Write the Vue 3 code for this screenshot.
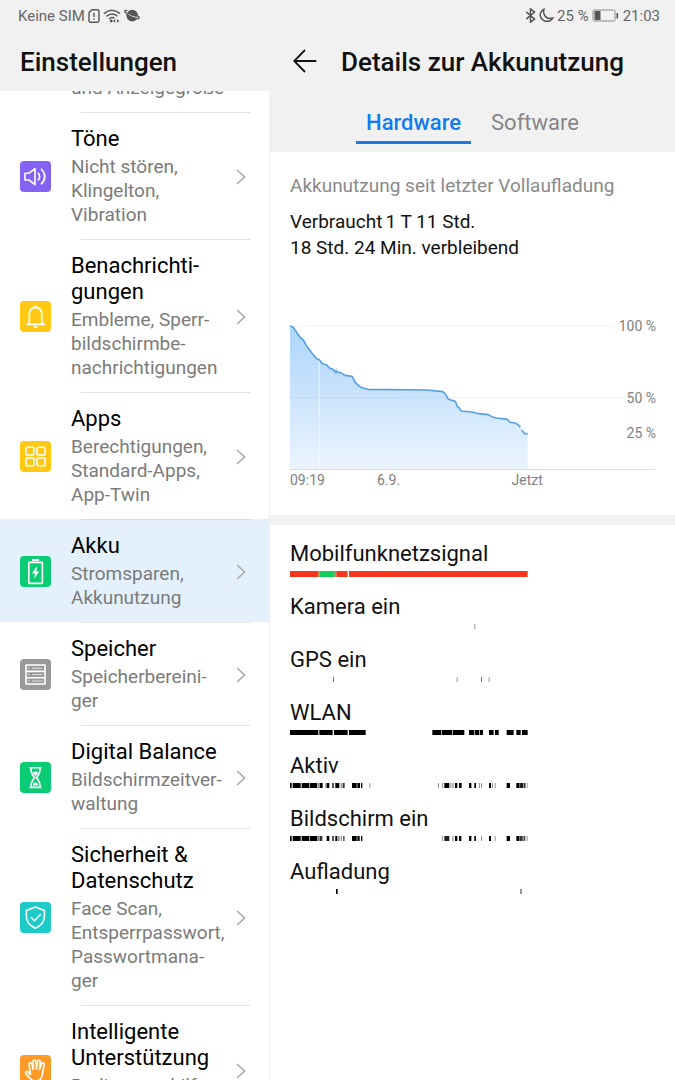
<script setup>
import { ref, computed } from 'vue'

const activeTab = ref('Hardware')
const tabs = ['Hardware', 'Software']

// \u00AD marks the places where a long word may break
const items = [
  { icon: 'sound', color: '#8463f2', title: 'Töne', desc: 'Nicht stören, Klingelton, Vibration' },
  { icon: 'bell', color: '#ffc813', title: 'Benachrichti\u00ADgungen', desc: 'Embleme, Sperr\u00ADbildschirmbe\u00ADnachrichtigungen' },
  { icon: 'apps', color: '#ffc813', title: 'Apps', desc: 'Berechtigungen, Standard-Apps, App-Twin' },
  { icon: 'battery', color: '#0bcb74', title: 'Akku', desc: 'Stromsparen, Akkunutzung', active: true },
  { icon: 'storage', color: '#999999', title: 'Speicher', desc: 'Speicherbereini\u00ADger' },
  { icon: 'hourglass', color: '#0bcb74', title: 'Digital Balance', desc: 'Bildschirmzeitver\u00ADwaltung' },
  { icon: 'shield', color: '#1ccbc8', title: 'Sicherheit & Datenschutz', desc: 'Face Scan, Entsperrpasswort, Passwortmana\u00ADger' },
  { icon: 'hand', color: '#ff9a26', title: 'Intelligente Unterstützung', desc: 'Bedienungshilfen' }
]

// chart space: 1095 wide, 429 high (0 % at the bottom)
const points = [
  [0, 0], [10, 4], [22, 22], [32, 36], [40, 42], [50, 60], [65, 80], [80, 98], [88, 101],
  [98, 114], [110, 116], [118, 126], [126, 128], [134, 136], [142, 137], [155, 142],
  [165, 148], [186, 151], [190, 158], [196, 170], [210, 182], [220, 187], [235, 190],
  [410, 192], [458, 197], [466, 204], [474, 218], [480, 221], [496, 226], [501, 240],
  [507, 245], [514, 255], [545, 258], [560, 262], [595, 266], [605, 272], [620, 276],
  [652, 280], [660, 289], [678, 292], [686, 298], [691, 304]
]
const tail = [[695, 312], [704, 323], [713, 323]]

const toPath = (list) => list.map((p) => p.join(',')).join(' ')
const linePath = computed(() => toPath(points))
const tailPath = computed(() => toPath(tail))
const areaPath = computed(() => `0,429 ${toPath(points)} ${toPath(tail)} 713,429`)

const levels = [
  { text: '100 %', top: 0 },
  { text: '50 %', top: 50 },
  { text: '25 %', top: 75 }
]
const times = [
  { text: '09:19', left: 0, edge: true },
  { text: '6.9.', left: 27 },
  { text: 'Jetzt', left: 65 }
]

// each bar: start, width, colour
const K = '#000000'
const G = '#999999'
const usage = [
  { name: 'Mobilfunknetzsignal', thick: true, bars: [[0, 86, '#f4361f'], [86, 4, '#c9a020'], [90, 44, '#12cf5a'], [134, 5, '#a09a30'], [139, 34, '#f4361f'], [177, 536, '#f4361f']] },
  { name: 'Kamera ein', bars: [[553, 3, G]] },
  { name: 'GPS ein', bars: [[129, 3, '#777777'], [500, 3, G], [573, 3, '#777777'], [596, 3, G]] },
  { name: 'WLAN', bars: [[0, 85, K], [88, 40, K], [132, 41, K], [177, 50, K], [427, 27, K], [456, 31, K], [489, 34, K], [537, 16, K], [555, 12, K], [569, 10, K], [597, 14, K], [615, 11, K], [650, 21, K], [679, 13, K], [696, 17, K]] },
  { name: 'Aktiv', bars: [[0, 5, K], [8, 24, K], [35, 23, K], [60, 21, K], [82, 6, G], [89, 9, K], [105, 4, G], [110, 8, K], [127, 4, K], [136, 12, K], [152, 4, G], [158, 6, '#333333'], [186, 14, K], [202, 8, K], [213, 4, K], [238, 3, G], [444, 3, G], [456, 3, G], [463, 15, K], [481, 3, G], [487, 4, G], [495, 7, K], [507, 8, K], [537, 7, K], [553, 5, K], [567, 3, G], [573, 3, G], [597, 6, K], [606, 3, G], [614, 3, G], [650, 10, K], [679, 8, K], [688, 12, '#222222'], [701, 6, '#444444'], [711, 2, G]] },
  { name: 'Bildschirm ein', bars: [[0, 5, K], [8, 24, K], [35, 23, K], [60, 21, K], [82, 6, '#777777'], [89, 8, '#333333'], [110, 8, K], [127, 4, K], [136, 6, K], [143, 6, G], [152, 4, G], [159, 5, '#666666'], [186, 14, K], [202, 7, K], [213, 4, K], [456, 3, G], [463, 15, '#222222'], [487, 4, G], [495, 7, K], [507, 7, K], [537, 7, K], [553, 5, K], [573, 3, G], [597, 6, K], [614, 3, G], [650, 10, K], [679, 8, K], [688, 10, '#333333'], [700, 6, '#555555'], [710, 3, G]] },
  { name: 'Aufladung', bars: [[138, 5, K], [691, 4, '#666666']] }
]
</script>

<template>
  <div class="screen">
    <div class="status-bar">
      <div class="status-side">
        <span>Keine SIM</span>
        <svg class="ic-sim" viewBox="0 0 12 14">
          <path d="M4 .8H9.4Q11 .8 11 2.4V11.6Q11 13.2 9.4 13.2H2.6Q1 13.2 1 11.6V3.8Z" />
          <path d="M6 3.8V8M6 9.4V10.8" />
        </svg>
        <svg class="ic-wifi" viewBox="0 0 18 14">
          <path d="M1 4.6Q9 -2.2 17 4.6M3.4 7.4Q9 2.6 14.4 7.2M5.8 10Q9 7.4 11.6 9.4" />
          <circle cx="8.2" cy="12" r="1.4" />
          <path class="solid" d="M10 11.9L12.2 9.9V13.8ZM16.2 11.9L14 9.9V13.8Z" />
        </svg>
        <svg class="ic-planet" viewBox="0 0 16 13">
          <circle cx="8.2" cy="6.6" r="5.8" />
          <path class="gap" d="M1.6 3Q6 8 14.6 8.6" />
          <path d="M3.4 1.6Q-0.6 .8 1.4 3.4Q5.6 8.6 12.6 9.6Q16.6 9.8 14.2 7" />
        </svg>
      </div>
      <div class="status-side">
        <svg class="ic-bt" viewBox="0 0 10 14">
          <path d="M1 3.6L8.8 10.2L5 13.2V.8L8.8 3.8L1 10.4" />
        </svg>
        <svg class="ic-moon" viewBox="0 0 14 14">
          <path d="M4.6 1.2C1.4 2.6 .4 6.2 1.8 9C3.6 12.8 9.6 14.2 13 9.4C9.6 10.4 6.8 9.6 5.4 7.2C4.4 5.4 4 3.2 4.6 1.2Z" />
        </svg>
        <span>25 %</span>
        <svg class="ic-cell" viewBox="0 0 27 13">
          <rect class="shell" x="1" y="1" width="22" height="11" rx="1.5" />
          <rect x="2.5" y="2" width="6" height="9" />
          <rect x="24.5" y="4" width="1.6" height="5.4" />
        </svg>
        <span class="clock">21:03</span>
      </div>
    </div>

    <div class="columns">
      <nav class="sidebar">
        <header class="side-head">
          <h1>Einstellungen</h1>
        </header>
        <div class="side-scroll">
          <ul class="menu">
            <li class="cut">
              <a class="row" href="#">
                <span class="texts"><span class="desc">und Anzeigegröße</span></span>
              </a>
            </li>
            <li v-for="item in items" :key="item.title" :class="{ active: item.active }">
              <div class="line"></div>
              <a class="row" href="#">
                <span class="tile" :style="{ background: item.color }">
                  <svg viewBox="0 0 31 31">
                    <g v-if="item.icon === 'sound'">
                      <path d="M5 12.2V19H9L15 23.6V7.6L9 12.2Z" />
                      <path d="M18 11.8Q21.2 15.6 18 19.4M21 7.8Q28.6 15.6 21 23.4" />
                    </g>
                    <g v-else-if="item.icon === 'bell'">
                      <path d="M6.4 23.4H25M8.4 23.2Q9.4 21.6 9.4 19V13Q9.6 6.6 15.6 6.4Q21.6 6.6 21.8 13V19Q21.8 21.6 22.8 23.2" />
                      <path class="fill" d="M13.4 25.2H17.8Q17.4 27 15.6 27T13.4 25.2ZM14.2 6.4Q14.4 4.6 15.6 4.6T17 6.4Z" />
                    </g>
                    <g v-else-if="item.icon === 'apps'">
                      <rect x="6" y="6.2" width="8" height="7.8" rx="1.4" />
                      <rect x="17" y="6.2" width="8" height="7.8" rx="1.4" />
                      <rect x="6" y="17" width="8" height="7.8" rx="1.4" />
                      <rect x="17" y="17" width="8" height="7.8" rx="1.4" />
                    </g>
                    <g v-else-if="item.icon === 'battery'">
                      <rect x="8.8" y="6.4" width="13.6" height="21" rx=".8" />
                      <path class="fill" d="M12 3H19V5H12ZM16.2 11L12 17.4H15L14.2 22.4L19.2 15.6H16L17.4 11Z" />
                    </g>
                    <g v-else-if="item.icon === 'storage'">
                      <path d="M6 6H25V25H6ZM6 12.4H25M6 18.8H25" />
                      <path d="M8.2 9.2H10M12 9.2H22.6M8.2 15.6H10M12 15.6H22.6M8.2 22H10M12 22H22.6" class="faint" />
                    </g>
                    <g v-else-if="item.icon === 'hourglass'">
                      <path d="M9.6 5.8H21.4M9.6 25.4H21.4M11 6Q10.6 11.4 14.6 15.6Q10.6 19.8 11 25.2M20 6Q20.4 11.4 16.4 15.6Q20.4 19.8 20 25.2" />
                      <path class="fill" d="M12.8 10.2Q15.6 8.8 18.2 10.2Q17.4 12.8 15.5 14Q13.6 12.8 12.8 10.2ZM12.4 23.6Q13.4 20.4 15.5 20.2Q17.6 20.4 18.6 23.6Z" />
                    </g>
                    <g v-else-if="item.icon === 'shield'">
                      <path d="M15.4 5L24.4 8.4V14.6Q24.2 22.6 15.4 26.2Q6.6 22.6 6.4 14.6V8.4Z" />
                      <path d="M10.8 15L14.4 18.8L20.8 12.2" />
                    </g>
                    <g v-else>
                      <path d="M10.4 17.6L9 9.8Q8.8 8 10 7.8T11.8 9L13.2 14.4L13 6.8Q13 5 14.4 5T15.8 6.6L16.4 14L17.6 6.4Q17.8 4.8 19.2 5.2T20.2 7L19.4 14.6L21.6 9Q22.2 7.6 23.4 8T24 10L22.4 19Q21.6 25.6 16 26Q12.6 26 10 23.4L5.8 18.6Q5 17.2 6 16.6T8 17L10.4 19.4Z" />
                    </g>
                  </svg>
                </span>
                <span class="texts">
                  <span class="title">{{ item.title }}</span>
                  <span class="desc">{{ item.desc }}</span>
                </span>
                <svg class="chevron" viewBox="0 0 10 16"><path d="M1 1L8.6 8L1 15" /></svg>
              </a>
            </li>
          </ul>
        </div>
      </nav>

      <main class="detail">
        <header class="detail-head">
          <div class="title-row">
            <button class="back" type="button" aria-label="Zurück">
              <svg viewBox="0 0 24 24"><path d="M23.4 12H1.2M12 1L1.2 12L12 23" /></svg>
            </button>
            <h2>Details zur Akkunutzung</h2>
          </div>
          <div class="tabs">
            <button
              v-for="tab in tabs"
              :key="tab"
              type="button"
              class="tab"
              :class="{ selected: tab === activeTab }"
              @click="activeTab = tab"
            >
              {{ tab }}
            </button>
          </div>
        </header>

        <section class="summary">
          <p class="hint">Akkunutzung seit letzter Vollaufladung</p>
          <p class="used"><span>Verbraucht</span><span>1 T 11 Std.</span></p>
          <p>18 Std. 24 Min. verbleibend</p>

          <div class="chart">
            <svg viewBox="0 0 1095 429" preserveAspectRatio="none">
              <defs>
                <linearGradient id="level-fill" x1="0" y1="0" x2="0" y2="1">
                  <stop offset="0" stop-color="#acd4fb" />
                  <stop offset="1" stop-color="#ebf4fe" />
                </linearGradient>
              </defs>
              <polygon :points="areaPath" fill="url(#level-fill)" />
              <path class="grid" d="M0 0H1095M0 215H1095" />
              <path class="mark" d="M88 102V429" />
              <polyline class="curve" :points="linePath" />
              <polyline class="curve" :points="tailPath" />
              <path class="curve thin" d="M138 128V144" />
            </svg>
            <span v-for="l in levels" :key="l.text" class="level" :style="{ top: l.top + '%' }">{{ l.text }}</span>
          </div>
          <div class="times">
            <span
              v-for="t in times"
              :key="t.text"
              :class="{ edge: t.edge }"
              :style="{ left: t.left + '%' }"
            >{{ t.text }}</span>
          </div>
        </section>

        <section class="usage">
          <div v-for="u in usage" :key="u.name" class="usage-row">
            <h3>{{ u.name }}</h3>
            <svg :class="{ thick: u.thick }" viewBox="0 0 1095 10" preserveAspectRatio="none">
              <rect v-for="(b, i) in u.bars" :key="i" :x="b[0]" y="0" :width="b[1]" height="10" :fill="b[2]" />
            </svg>
          </div>
        </section>
      </main>
    </div>
  </div>
</template>

<style>
body {
  margin: 0;
  background: #ffffff;
}
</style>

<style scoped>
.screen {
  height: 100vh;
  display: flex;
  flex-direction: column;
  overflow: hidden;
  background: #ffffff;
  color: #111111;
  font-family: Roboto, "Noto Sans", sans-serif;
}

h1, h2, h3, p, ul {
  margin: 0;
  padding: 0;
  font-weight: 400;
}

button {
  border: none;
  background: none;
  padding: 0;
  font-family: inherit;
  cursor: pointer;
}

svg {
  display: block;
  fill: none;
}

/* status bar */
.status-bar {
  flex: none;
  height: 31px;
  padding: 0 15px 0 18px;
  display: flex;
  justify-content: space-between;
  align-items: center;
  background: #f1f1f1;
  color: #666666;
  font-size: 15px;
}

.status-side {
  display: flex;
  align-items: center;
  gap: 3px;
}

.status-side svg {
  stroke: #555555;
  stroke-width: 1.4;
}

.ic-sim {
  width: 12px;
  height: 14px;
}

.ic-wifi {
  width: 18px;
  height: 14px;
}

.ic-wifi .solid {
  fill: #555555;
  stroke: none;
}

.ic-wifi circle {
  fill: #555555;
  stroke: none;
}

.ic-planet {
  width: 16px;
  height: 13px;
}

.ic-planet circle {
  fill: #555555;
  stroke: none;
}

.ic-planet .gap {
  stroke: #f1f1f1;
  stroke-width: 1;
}

.ic-bt {
  width: 11px;
  height: 15px;
}

.ic-moon {
  width: 15px;
  height: 15px;
}

.ic-cell {
  width: 27px;
  height: 13px;
}

.status-side .ic-cell {
  fill: #555555;
  stroke: none;
}

.ic-cell .shell {
  fill: none;
  stroke: #888888;
  stroke-width: 1;
}

.clock {
  margin-left: 1px;
}

/* two columns */
.columns {
  flex: 1;
  min-height: 0;
  display: flex;
}

.sidebar {
  width: 40%;
  box-sizing: border-box;
  display: flex;
  flex-direction: column;
}

.side-head {
  flex: none;
  height: 60px;
  padding-left: 20px;
  display: flex;
  align-items: center;
  background: #f1f1f1;
}

h1, h2 {
  padding-top: 2px;
  font-size: 26px;
  line-height: 32px;
  font-weight: 500;
}

.side-scroll {
  flex: 1;
  min-height: 0;
  overflow: hidden;
  border-right: 1px solid #f1f1f1;
}

/* the list stands scrolled, so its first entry is half hidden */
.menu {
  list-style: none;
  margin-top: -28px;
}

.line {
  height: 1px;
  margin: 0 19px 0 81px;
  background: #e2e2e2;
}

.active {
  background: #e4f1fd;
}

.active .line {
  background: #cfdbe6;
}

.row {
  display: flex;
  align-items: center;
  padding: 13px 20px 12px;
  color: inherit;
  text-decoration: none;
}

.tile {
  flex: none;
  width: 31px;
  height: 31px;
  border-radius: 4px;
}

.tile svg {
  width: 31px;
  height: 31px;
  stroke: #ffffff;
  stroke-width: 1.6;
  stroke-linejoin: round;
}

.tile .fill {
  fill: #ffffff;
  stroke: none;
}

.tile .faint {
  stroke-width: 1;
  opacity: 0.7;
}

.texts {
  flex: 1;
  min-width: 0;
  margin: 0 11px 0 20px;
  display: flex;
  flex-direction: column;
  gap: 3px;
}

.title {
  font-size: 22px;
  line-height: 26px;
  color: #000000;
}

.desc {
  min-height: 48px;
  font-size: 19px;
  line-height: 24px;
  color: #7b7b7b;
}

.cut .row {
  padding-left: 51px;
}

.cut .texts {
  margin-right: 0;
}

.cut .desc {
  min-height: 0;
}

.chevron {
  flex: none;
  width: 10px;
  height: 16px;
  margin-right: 3px;
  stroke: #aaaaaa;
  stroke-width: 1.6;
}

/* detail pane */
.detail {
  flex: 1;
  min-width: 0;
}

.detail-head {
  background: #f1f1f1;
  height: 121px;
}

.title-row {
  height: 60px;
  padding-left: 23px;
  display: flex;
  align-items: center;
  gap: 24px;
}

.back svg {
  width: 24px;
  height: 24px;
  stroke: #111111;
  stroke-width: 1.8;
}

.tabs {
  height: 53px;
  display: flex;
  justify-content: center;
  gap: 10px;
}

.tab {
  box-sizing: border-box;
  height: 53px;
  padding: 12px 10px 0;
  border-bottom: 3px solid transparent;
  font-size: 22px;
  color: #868686;
}

.tab.selected {
  color: #117bf0;
  border-bottom-color: #1a7ae0;
  font-weight: 500;
}

.summary {
  padding: 21px 20px 24px;
  border-bottom: 10px solid #f1f1f1;
  font-size: 19px;
  line-height: 26px;
}

.hint {
  margin-bottom: 10px;
  color: #8a8a8a;
}

.used {
  display: flex;
  gap: 3px;
}

.chart {
  position: relative;
  height: 143px;
  margin-top: 65px;
  border-bottom: 1px solid #dddddd;
}

.chart svg {
  width: 100%;
  height: 100%;
  overflow: visible;
}

.chart path,
.chart polyline {
  vector-effect: non-scaling-stroke;
}

.grid {
  stroke: rgba(0, 0, 0, 0.05);
  stroke-width: 1;
}

.mark {
  stroke: rgba(255, 255, 255, 0.6);
  stroke-width: 1;
}

.curve {
  stroke: #569fe6;
  stroke-width: 1.6;
  stroke-linejoin: round;
}

.curve.thin {
  stroke-width: 1;
}

.level {
  position: absolute;
  right: -1px;
  transform: translateY(-50%);
  padding-left: 3px;
  background: #ffffff;
  font-size: 14px;
  line-height: 18px;
  color: #808080;
}

.times {
  position: relative;
  height: 21px;
  font-size: 14px;
  line-height: 21px;
  color: #808080;
}

.times span {
  position: absolute;
  transform: translateX(-50%);
}

.times .edge {
  transform: none;
}

.usage {
  padding: 16px 20px;
  display: flex;
  flex-direction: column;
  gap: 17px;
}

.usage-row {
  height: 36px;
}

h3 {
  margin-bottom: 4px;
  font-size: 22px;
  line-height: 26px;
}

.usage-row svg {
  width: 100%;
  height: 5px;
}

.usage-row svg.thick {
  height: 6px;
}
</style>
